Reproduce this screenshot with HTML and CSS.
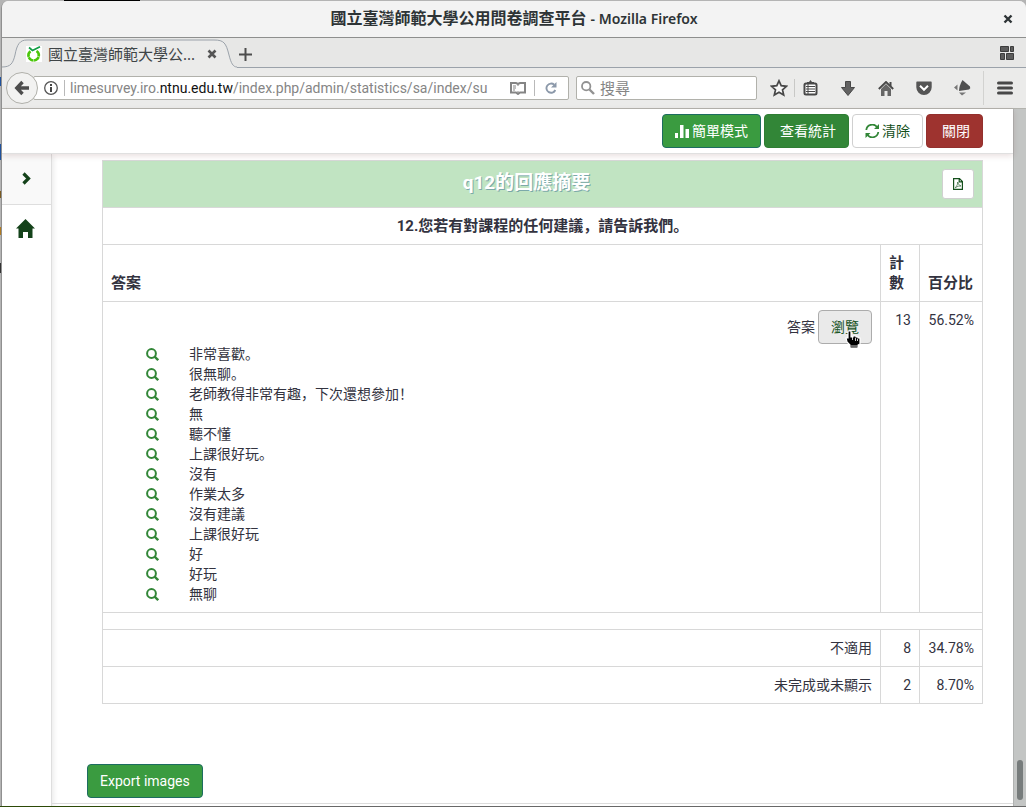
FILE: index.html
```html
<!DOCTYPE html>
<html lang="zh">
<head>
<meta charset="utf-8">
<title>國立臺灣師範大學公用問卷調查平台</title>
<link rel="stylesheet" href="styles.css">
</head>
<body>
<div class="desktop">
<div class="window">
  <header class="titlebar">
    <h1 class="window-title">國立臺灣師範大學公用問卷調查平台 <span class="latin">- Mozilla Firefox</span></h1>
    <button class="plain window-close" aria-label="關閉視窗"><svg width="10" height="10" viewBox="0 0 10 10"><path d="M1.500 1.500l7 7M8.500 1.500l-7 7" stroke="#2e3436" stroke-width="2.400"/></svg></button>
  </header>

  <div class="tabs">
    <div class="tab">
      <svg class="tab-shape" width="235" height="30" viewBox="0 0 235 30"><path d="M0 30V29C9 29 11 25 13 17C15 6 18 2 25 2H212C222 2 224 5 227 17C229 25 231 29 235 29V30Z" fill="#ebebea"/><path d="M0 29C9 29 11 25 13 17C15 6 18 2 25 2H212C222 2 224 5 227 17C229 25 231 29 235 29" fill="none" stroke="#9ba2aa"/></svg>
      <svg class="favicon" width="16" height="16" viewBox="0 0 16 16"><rect width="16" height="16" fill="#fff"/><path d="M4.500 5.200A5.200 5.200 0 1 0 10.500 5" fill="none" stroke="#4bc60a" stroke-width="2.600" stroke-dasharray="6 .5"/><path d="M3 1.500L6.500 4.500L14 .8" fill="none" stroke="#109d43" stroke-width="1.700"/></svg>
      <span class="tab-label">國立臺灣師範大學公...</span>
      <button class="plain tab-close" aria-label="關閉分頁"><svg width="10" height="10" viewBox="0 0 10 10"><path d="M1.500 1.500l7 7M8.500 1.500l-7 7" stroke="#555" stroke-width="2.600"/></svg></button>
    </div>
    <button class="plain tab-new" aria-label="開新分頁"><svg width="13" height="13" viewBox="0 0 13 13"><path d="M6.500 0v13M0 6.500h13" stroke="#4d4d4d" stroke-width="2"/></svg></button>
    <button class="plain tab-groups" aria-label="分頁群組"><svg width="14" height="14" viewBox="0 0 14 14" fill="#5c5c5c" stroke="#3d3d3d"><path d="M.5.500h8v5h-8zM10.500.500h3v5h-3zM.5 7.500h4v6h-4zM6.500 7.500h7v6h-7z"/></svg></button>
  </div>

  <nav class="navbar" aria-label="瀏覽工具列">
    <button class="back" aria-label="上一頁"><svg width="16" height="16" viewBox="0 0 16 16"><path d="M8.500 2L2.800 8l5.700 6M3 8h12" fill="none" stroke="#4d4d4d" stroke-width="3.400"/></svg></button>
    <div class="urlbar">
      <svg width="14" height="14" viewBox="0 0 14 14"><circle cx="7" cy="7" r="6.300" fill="none" stroke="#555" stroke-width="1.300"/><path d="M7 3v2M7 6v5" stroke="#444" stroke-width="2"/></svg>
      <div class="url" role="textbox" aria-label="網址" contenteditable="true" spellcheck="false">limesurvey.iro.<span class="host">ntnu.edu.tw</span>/index.php/admin/statistics/sa/index/su</div>
      <button class="plain" aria-label="閱讀模式"><svg width="16" height="13" viewBox="0 0 16 13"><path d="M1 1h5l2 1 2-1h5v9.500H10L8 12l-2-1.500H1z" fill="#fff" stroke="#858585" stroke-width="2"/><path d="M8 2v2M8 9v2M3 4h3M3 6h3M3 8h2" stroke="#858585"/></svg></button>
      <button class="plain reload" aria-label="重新載入"><svg width="12" height="12" viewBox="0 0 12 12"><path d="M9.200 2.800A4.600 4.600 0 1 0 10.300 8" fill="none" stroke="#8c99aa" stroke-width="1.900"/><path d="M11.500 0v5.500H6z" fill="#8c99aa"/></svg></button>
    </div>
    <div class="searchbar">
      <svg width="14" height="14" viewBox="0 0 14 14"><circle cx="5.200" cy="5.200" r="4.200" fill="none" stroke="#929292" stroke-width="1.800"/><path d="M8.500 8.500L13 13" stroke="#929292" stroke-width="2.400"/></svg>
      <input class="search" type="text" placeholder="搜尋" aria-label="搜尋">
    </div>
    <button class="plain tool tool-star" aria-label="加入書籤"><svg width="18" height="18" viewBox="0 0 18 18"><path d="M9 1.800l2.200 4.900 5.300.6-4 3.500 1.200 5.300L9 13.300l-4.700 2.800 1.200-5.300-4-3.500 5.300-.6z" fill="#f7f7f7" stroke="#484848" stroke-width="1.700"/></svg></button>
    <button class="plain tool tool-list" aria-label="書籤"><svg width="15" height="16" viewBox="0 0 15 16"><rect x="1.500" y="3.500" width="12" height="11" rx="1.500" fill="#fff" stroke="#484848" stroke-width="2"/><path d="M4 3V2h2l1.500-2L9 2h2v1z" fill="#484848"/><path d="M3 6.500h9M3 9h9M3 11.500h9M5 4v10" stroke="#484848"/></svg></button>
    <button class="plain tool" aria-label="下載"><svg width="14" height="15" viewBox="0 0 14 15"><path d="M4.500.500h5v6h4L7 14.500.500 6.500h4z" fill="#626262" stroke="#484848"/></svg></button>
    <button class="plain tool" aria-label="首頁"><svg width="16" height="15" viewBox="0 0 16 15"><path d="M3 8l5-5 5 5v7H9.500V10h-3v5H3z" fill="#666"/><path d="M.8 8L8 1l7.200 7" fill="none" stroke="#484848" stroke-width="1.900"/><path d="M12.500 1v4" stroke="#484848" stroke-width="2"/></svg></button>
    <button class="plain tool" aria-label="Pocket"><svg width="16" height="15" viewBox="0 0 16 15"><path d="M1 .5h14q.7 0 .7 1v4.800a7.700 7.700 0 0 1-15.400 0V1.500q0-1 .7-1z" fill="#555"/><path d="M4 4.800l4 4 4-4" fill="none" stroke="#fff" stroke-width="2"/></svg></button>
    <button class="plain tool" aria-label="附加元件"><svg width="17" height="16" viewBox="0 0 17 16"><path d="M8.500 0L16 6.500q1 2-1 3L5 11Q5 6 8.500 0z" fill="#505050"/><path d="M3.500 4.500v6L0 7.500zM5 12.500h7l-4 3z" fill="#777"/></svg></button>
    <button class="plain tool-menu" aria-label="選單"><svg width="16" height="14" viewBox="0 0 16 14"><path d="M1.500 2h13M1.500 7h13M1.500 12h13" stroke="#484848" stroke-width="3" stroke-linecap="round"/></svg></button>
  </nav>

  <div class="viewport">
    <div class="page">
      <div class="actions">
        <button class="btn btn-primary"><svg width="15" height="13" viewBox="0 0 15 13"><path d="M0 8h3v5H0zM5 0h3.500v13H5zM10.500 4H14v9h-3.500z" fill="#fff"/></svg>簡單模式</button>
        <button class="btn btn-dark btn-wide">查看統計</button>
        <button class="btn btn-default"><svg width="15" height="14" viewBox="0 0 15 14"><path d="M1.300 6A6 6 0 0 1 12 3M13.300 8A6 6 0 0 1 2.600 11" fill="none" stroke="#328637" stroke-width="1.800"/><path d="M14 0v5H9zM.5 14V9h5z" fill="#328637"/></svg>清除</button>
        <button class="btn btn-danger btn-wide">關閉</button>
      </div>

      <div class="columns">
        <aside class="sidebar">
          <button class="plain side-toggle" aria-label="展開側邊欄"><svg width="9" height="13" viewBox="0 0 9 13"><path d="M1.500 1.500L6.500 6.500l-5 5" fill="none" stroke="#14421a" stroke-width="3.200"/></svg></button>
          <a class="side-home" href="#" aria-label="首頁"><svg width="19" height="19" viewBox="0 0 19 19"><path d="M9.500 0L19 9.500h-2.500V19H12v-6H7v6H2.500V9.500H0z" fill="#14421a"/></svg></a>
        </aside>

        <main class="content">
          <table class="summary">
            <colgroup><col><col class="col-count"><col class="col-percent"></colgroup>
            <thead>
              <tr class="row-title"><th colspan="3"><div class="title-line"><h2 class="summary-title">q12的回應摘要</h2><button class="btn-pdf" aria-label="PDF"><svg width="10" height="12" viewBox="0 0 10 12"><path d="M.6.600H6.500L9.400 3.500v7.900H.6zM6.200.600v3.200h3.200" fill="none" stroke="#14501c" stroke-width="1.200"/><path d="M2.300 9.800Q5 7 4.700 4Q5 7 8 8Q5 7.500 2.300 9.800" fill="none" stroke="#14501c" stroke-width=".6"/></svg></button></div></th></tr>
              <tr><th class="question" colspan="3">12.您若有對課程的任何建議，請告訴我們。</th></tr>
              <tr class="row-labels"><th>答案</th><th>計數</th><th>百分比</th></tr>
            </thead>
            <tbody>
              <tr>
                <td>
                  <div class="browse-line"><span>答案</span><button class="btn btn-browse">瀏覽<svg class="pointer" width="16" height="19" viewBox="0 0 16 19"><path d="M3 1h3v6h2V6h3v1h2v1h2v6l-2 1v3H5v-3L2 12 1 8h2z" fill="#000" stroke="#fff" stroke-width="1.200"/><path d="M7.500 7v3M10.500 8v3M12.500 9v2M7 15v2M9 15v2M11 15v2" stroke="#fff" stroke-width=".8"/></svg></button></div>
                  <ul class="answers">
                    <li><a href="#" aria-label="檢視"><svg class="lens" viewBox="0 0 13 13"><use href="#lens"/></svg></a>非常喜歡。</li>
                    <li><a href="#" aria-label="檢視"><svg class="lens" viewBox="0 0 13 13"><use href="#lens"/></svg></a>很無聊。</li>
                    <li><a href="#" aria-label="檢視"><svg class="lens" viewBox="0 0 13 13"><use href="#lens"/></svg></a>老師教得非常有趣，下次還想參加！</li>
                    <li><a href="#" aria-label="檢視"><svg class="lens" viewBox="0 0 13 13"><use href="#lens"/></svg></a>無</li>
                    <li><a href="#" aria-label="檢視"><svg class="lens" viewBox="0 0 13 13"><use href="#lens"/></svg></a>聽不懂</li>
                    <li><a href="#" aria-label="檢視"><svg class="lens" viewBox="0 0 13 13"><use href="#lens"/></svg></a>上課很好玩。</li>
                    <li><a href="#" aria-label="檢視"><svg class="lens" viewBox="0 0 13 13"><use href="#lens"/></svg></a>沒有</li>
                    <li><a href="#" aria-label="檢視"><svg class="lens" viewBox="0 0 13 13"><use href="#lens"/></svg></a>作業太多</li>
                    <li><a href="#" aria-label="檢視"><svg class="lens" viewBox="0 0 13 13"><use href="#lens"/></svg></a>沒有建議</li>
                    <li><a href="#" aria-label="檢視"><svg class="lens" viewBox="0 0 13 13"><use href="#lens"/></svg></a>上課很好玩</li>
                    <li><a href="#" aria-label="檢視"><svg class="lens" viewBox="0 0 13 13"><use href="#lens"/></svg></a>好</li>
                    <li><a href="#" aria-label="檢視"><svg class="lens" viewBox="0 0 13 13"><use href="#lens"/></svg></a>好玩</li>
                    <li><a href="#" aria-label="檢視"><svg class="lens" viewBox="0 0 13 13"><use href="#lens"/></svg></a>無聊</li>
                  </ul>
                </td>
                <td>13</td><td>56.52%</td>
              </tr>
              <tr><td colspan="3"></td></tr>
              <tr><td>不適用</td><td>8</td><td>34.78%</td></tr>
              <tr><td>未完成或未顯示</td><td>2</td><td>8.70%</td></tr>
            </tbody>
          </table>
          <div class="export"><button class="btn btn-primary">Export images</button></div>
        </main>
      </div>
    </div>
    <div class="scrollbar"><div class="thumb"></div></div>
  </div>
</div>
</div>
<svg class="symbols" aria-hidden="true"><symbol id="lens" viewBox="0 0 13 13"><circle cx="5.500" cy="5.500" r="4.400" fill="none" stroke="#328637" stroke-width="2"/><path d="M8.600 8.600L12.200 12.200" stroke="#328637" stroke-width="2.300"/></symbol></svg>
</body>
</html>
```
FILE: styles.css
```css
* { box-sizing: border-box; }

body {
  margin: 0;
  color: #33333f;
  font: 14px/20px Roboto, "Noto Sans CJK SC", sans-serif;
}

svg { display: block; flex: none; }
.symbols { position: absolute; width: 0; height: 0; }

button, input { font: inherit; color: inherit; }

.plain {
  display: flex;
  align-items: center;
  justify-content: center;
  padding: 0;
  border: 0;
  background: none;
}

.desktop {
  display: flex;
  min-height: 100vh;
  padding: 1px 0 1px 1px;
  background:
    linear-gradient(#000, #000) 64px 0 / 76px 1px no-repeat,
    linear-gradient(90deg, #2d4a08 140px, #686868 140px) 0 100% / 100% 1px no-repeat,
    linear-gradient(#1f519c, #1f519c) 0 77px / 1px 9px no-repeat,
    linear-gradient(#1f519c, #1f519c) 0 144px / 1px 16px no-repeat,
    linear-gradient(#7a5a20, #7a5a20) 0 191px / 1px 7px no-repeat,
    linear-gradient(#b07a20, #b07a20) 0 227px / 1px 8px no-repeat,
    linear-gradient(#333, #333) 0 263px / 1px 10px no-repeat,
    #b4b4b4;
}

.window {
  display: flex;
  flex-direction: column;
  flex: 1;
  min-width: 0;
  border-left: 1px solid #909090;
  border-radius: 7px 7px 0 0;
  overflow: hidden;
  background: #ebebea;
}

/* Browser chrome */
.titlebar {
  display: flex;
  align-items: center;
  height: 37px;
  padding: 0 13px 0 23px;
  border-bottom: 1px solid #8e8f8e;
  background: #f3f3f3;
}

.window-title {
  flex: 1;
  margin: 0;
  padding-bottom: 2px;
  color: #2e3436;
  font: bold 16px/20px "Noto Sans", "Noto Sans CJK TC", sans-serif;
  text-align: center;
}

.latin { font-size: 14px; font-weight: 600; }

.tabs {
  display: flex;
  align-items: center;
  height: 30px;
  padding-right: 12px;
  background: linear-gradient(transparent 29px, #9ba2aa 29px), #e7e7e6;
}

.tab {
  position: relative;
  display: flex;
  align-items: center;
  width: 235px;
  height: 30px;
  padding: 2px 20px 0 24px;
}

.tab-shape { position: absolute; left: 0; top: 0; }
.favicon, .tab-label, .tab-close { position: relative; }

.tab-label {
  flex: 1;
  padding-left: 6px;
  color: #3f4547;
  font: 15px/20px "Noto Sans", "Noto Sans CJK TC", sans-serif;
  white-space: nowrap;
}

.tab-new { padding: 2px 2px 0; }
.tab-groups { margin-left: auto; }

.navbar {
  display: flex;
  align-items: center;
  height: 41px;
  padding-left: 4px;
  border-bottom: 1px solid #b3b3ae;
}

.back {
  position: relative;
  z-index: 1;
  display: flex;
  align-items: center;
  justify-content: center;
  width: 32px;
  height: 32px;
  margin-right: -5px;
  padding: 0;
  border: 1px solid #b0b0aa;
  border-radius: 50%;
  background: #f2f2f1;
}

.urlbar, .searchbar {
  display: flex;
  align-items: center;
  height: 24px;
  border: 1px solid #b1b1ab;
  border-radius: 2px;
  background: #fff;
}

.urlbar {
  flex: 1;
  min-width: 0;
  margin-right: 7px;
  padding: 0 11px 0 10px;
}

.url {
  flex: 1;
  min-width: 0;
  height: 16px;
  margin-left: 6px;
  padding-left: 5px;
  border-left: 1px solid #b9b9b9;
  color: #858585;
  font: 14px/16px Roboto, sans-serif;
  white-space: nowrap;
}

.host { color: #111; }

.reload {
  height: 16px;
  margin-left: 8px;
  padding-left: 10px;
  border-left: 1px solid #b9b9b9;
}

.searchbar { width: 181px; margin-right: 7px; padding-left: 4px; }

.search {
  flex: 1;
  min-width: 0;
  padding: 0 5px;
  border: 0;
  outline: 0;
  background: none;
  font: 15px/20px "Noto Sans CJK TC", sans-serif;
}

.search::placeholder { color: #858585; }

.tool { width: 38px; height: 18px; }
.tool-star { width: 30px; }
.tool-list { width: 32px; margin-right: 3px; border-left: 1px solid #c8c8c6; }
.tool-menu { width: 43px; height: 34px; margin-left: 2px; border-left: 1px solid #d2d2d0; }

/* Page */
.viewport { display: flex; flex: 1; }

.page {
  display: flex;
  flex-direction: column;
  flex: 1;
  min-width: 0;
  background: #fff;
}

.actions {
  position: relative;
  display: flex;
  justify-content: flex-end;
  gap: 3px;
  padding: 5px 30px 5px 0;
  border-bottom: 1px solid #e0e0e0;
  box-shadow: 0 2px 6px rgba(90, 20, 20, 0.14);
}

.btn {
  display: inline-flex;
  align-items: center;
  gap: 2px;
  padding: 6px 12px;
  border: 1px solid #d0d0d0;
  border-radius: 4px;
  background: #fff;
  color: #14501c;
  white-space: nowrap;
}

.btn-wide { padding-left: 15px; }
.btn-primary { border-color: #1d6c60; background: #3a9b40; color: #fff; }
.btn-dark { border-color: #2f7d34; background: #328637; color: #fff; }
.btn-danger { border-color: #93302d; background: #9e332f; color: #fff; }

.columns { display: flex; flex: 1; }

.sidebar {
  width: 50px;
  border-right: 1px solid #dedede;
  box-shadow: 2px 2px 5px rgba(0, 0, 0, 0.08);
}

.side-toggle {
  width: 49px;
  height: 51px;
  padding-bottom: 2px;
  border-bottom: 1px solid #dedede;
  background: #f9f9f9;
}

.side-home { display: flex; justify-content: center; padding: 14px 2px 0 0; }

.content {
  display: flex;
  flex-direction: column;
  flex: 1;
  min-width: 0;
  padding: 6px 30px 2px 50px;
}

.summary {
  width: 100%;
  border-collapse: collapse;
  table-layout: fixed;
}

.col-count { width: 39px; }
.col-percent { width: 63px; }

.summary th, .summary td { padding: 8px; border: 1px solid #d8d8d8; }
.summary th { font-size: 15px; font-weight: bold; text-align: left; vertical-align: bottom; }
.summary td { text-align: right; vertical-align: top; }
.summary .question { text-align: center; }
.summary .row-title th { background: #c1e4c2; }

.title-line { display: flex; align-items: flex-start; }

.summary-title {
  flex: 1;
  margin: 0;
  color: #fff;
  font-size: 19px;
  font-weight: bold;
  line-height: 28px;
  text-align: center;
  text-shadow: 1px 1px 0 #7ca9a9;
}

.btn-pdf {
  display: flex;
  align-items: center;
  justify-content: center;
  width: 32px;
  height: 30px;
  padding: 0;
  border: 1px solid #d0d0d0;
  border-radius: 3px;
  background: #fff;
}

.browse-line {
  display: flex;
  align-items: center;
  justify-content: flex-end;
  gap: 3px;
}

.btn-browse { position: relative; border-color: #acacac; background: #eaeaea; }
.pointer { position: absolute; left: 26px; top: 19px; }

.answers {
  margin: 0;
  padding: 0 0 0 35px;
  list-style: none;
  text-align: left;
}

.answers li { display: flex; align-items: center; gap: 30px; }
.lens { width: 13px; height: 13px; }

.export {
  margin: 60px 0 5px -15px;
}

.content::after {
  content: "";
  margin: auto -30px 0 -50px;
  border-top: 1px solid #dcdcdc;
}

.scrollbar {
  display: flex;
  align-items: flex-end;
  justify-content: center;
  width: 13px;
  padding-bottom: 6px;
  border-left: 1px solid #b0b2b1;
  background: #c3c5c4;
}

.thumb { width: 6px; height: 40px; border-radius: 3px; background: #777c7c; }
```
